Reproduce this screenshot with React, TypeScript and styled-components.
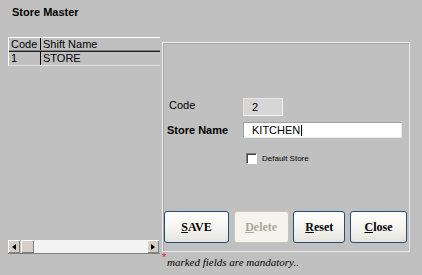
import styled, { createGlobalStyle } from "styled-components";

const GlobalStyle = createGlobalStyle`
  html, body {
    margin: 0;
    padding: 0;
  }
  body {
    background: #c0c0c0;
    font-family: "Liberation Sans", Arial, sans-serif;
    font-size: 11px;
    color: #000;
  }
`;

const rows = [{ code: "1", name: "STORE" }];

const buttons = [
  { label: "SAVE", width: 65, disabled: false },
  { label: "Delete", width: 55, disabled: true },
  { label: "Reset", width: 52, disabled: false },
  { label: "Close", width: 57, disabled: false },
];

const ActionButton = ({
  label,
  width,
  disabled,
}: {
  label: string;
  width: number;
  disabled: boolean;
}) => (
  <Button $width={width} disabled={disabled}>
    <u>{label[0]}</u>
    {label.slice(1)}
  </Button>
);

const App = () => {
  return (
    <Page>
      <GlobalStyle />
      <Title>Store Master</Title>
      <Main>
        <LeftColumn>
          <Table>
            <HeaderRow>
              <Cell>Code</Cell>
              <Cell $divider>Shift Name</Cell>
            </HeaderRow>
            {rows.map((row) => (
              <DataRow key={row.code}>
                <Cell>{row.code}</Cell>
                <Cell $divider>{row.name}</Cell>
              </DataRow>
            ))}
          </Table>
          <ScrollBar>
            <ScrollButton>
              <Arrow $dir="left" />
            </ScrollButton>
            <ScrollButton $thumb />
            <Track />
            <ScrollButton>
              <Arrow $dir="right" />
            </ScrollButton>
          </ScrollBar>
        </LeftColumn>
        <RightColumn>
          <Panel>
            <Form>
              <Label $top>Code</Label>
              <CodeBox>2</CodeBox>
              <Label $bold>Store Name</Label>
              <TextBox>
                KITCHEN
                <Caret />
              </TextBox>
              <CheckRow>
                <CheckBox />
                <CheckLabel>Default Store</CheckLabel>
              </CheckRow>
            </Form>
            <ButtonRow>
              {buttons.map((b) => (
                <ActionButton key={b.label} {...b} />
              ))}
            </ButtonRow>
          </Panel>
          <Footnote>
            <Star>*</Star>
            <Note>marked fields are mandatory..</Note>
          </Footnote>
        </RightColumn>
      </Main>
    </Page>
  );
};

export default App;

const Page = styled.div`
  width: 422px;
  height: 275px;
  overflow: hidden;
  display: flex;
  flex-direction: column;
`;

const Title = styled.div`
  height: 13px;
  padding: 6px 0 0 12px;
  font-weight: bold;
  font-size: 11px;
  line-height: 13px;
`;

const Main = styled.div`
  display: grid;
  grid-template-columns: 152px 248px;
  column-gap: 2px;
  margin: 18px 0 0 8px;
`;

const LeftColumn = styled.div`
  display: flex;
  flex-direction: column;
  height: 216px;
`;

const Table = styled.div`
  border-left: 1px solid #ffffff;
`;

const HeaderRow = styled.div`
  display: grid;
  grid-template-columns: 31px 1fr;
  height: 12px;
  border-top: 1px solid #ffffff;
  border-bottom: 1px solid #808080;
  box-shadow: 0 1px 0 #202020;
  margin-bottom: 1px;
`;

const DataRow = styled.div`
  display: grid;
  grid-template-columns: 31px 1fr;
  height: 13px;
  border-bottom: 1px solid #e4e4e4;
`;

const Cell = styled.div<{ $divider?: boolean }>`
  padding-left: ${(p) => (p.$divider ? 2 : 2)}px;
  border-left: ${(p) => (p.$divider ? "1px solid #000" : "none")};
  font-size: 11px;
  line-height: 13px;
  white-space: nowrap;
  overflow: hidden;
`;

const ScrollBar = styled.div`
  margin-top: auto;
  display: flex;
  height: 13px;
  box-shadow: 0 1px 0 #808080;
`;

const ScrollButton = styled.div<{ $thumb?: boolean }>`
  width: ${(p) => (p.$thumb ? 13 : 12)}px;
  height: 13px;
  margin-right: ${(p) => (p.$thumb ? 0 : 1)}px;
  box-sizing: border-box;
  background: #d4d0c8;
  box-shadow: inset 1px 1px 0 #ffffff, inset -1px -1px 0 #808080;
  display: flex;
  align-items: center;
  justify-content: center;
`;

const Arrow = styled.div<{ $dir: "left" | "right" }>`
  width: 0;
  height: 0;
  border-top: 3px solid transparent;
  border-bottom: 3px solid transparent;
  border-left: ${(p) => (p.$dir === "right" ? "4px solid #000" : "none")};
  border-right: ${(p) => (p.$dir === "left" ? "4px solid #000" : "none")};
`;

const Track = styled.div`
  flex: 1;
  background: #f4f4f4;
`;

const RightColumn = styled.div`
  display: flex;
  flex-direction: column;
  padding-top: 5px;
`;

const Panel = styled.div`
  box-sizing: border-box;
  height: 210px;
  border: 1px solid #ececec;
  box-shadow: inset 1px 1px 0 #a8a8a8;
  display: flex;
  flex-direction: column;
`;

const Form = styled.div`
  display: grid;
  grid-template-columns: 76px auto;
  align-items: center;
  row-gap: 6px;
  padding: 55px 0 0 4px;
`;

const Label = styled.div<{ $bold?: boolean; $top?: boolean }>`
  font-size: 11px;
  line-height: 13px;
  font-weight: ${(p) => (p.$bold ? "bold" : "normal")};
  padding-left: ${(p) => (p.$top ? 2 : 0)}px;
  align-self: ${(p) => (p.$top ? "start" : "center")};
  padding-top: ${(p) => (p.$top ? 1 : 0)}px;
`;

const CodeBox = styled.div`
  box-sizing: border-box;
  width: 40px;
  height: 18px;
  padding-left: 8px;
  background: #d6d6d6;
  border: 1px solid #e6e6e6;
  border-right-color: #f4f4f4;
  border-bottom-color: #f4f4f4;
  line-height: 16px;
  font-size: 11px;
`;

const TextBox = styled.div`
  box-sizing: border-box;
  width: 159px;
  height: 16px;
  padding-left: 8px;
  background: #ffffff;
  border: 1px solid #a0a0a0;
  border-right-color: #e8e8e8;
  border-bottom-color: #e8e8e8;
  line-height: 14px;
  font-size: 11px;
  display: flex;
  align-items: center;
`;

const Caret = styled.span`
  display: inline-block;
  width: 1px;
  height: 11px;
  background: #000;
  margin-left: 1px;
`;

const CheckRow = styled.div`
  grid-column: 2;
  display: flex;
  align-items: center;
  gap: 5px;
  padding-left: 3px;
  margin-top: 9px;
`;

const CheckBox = styled.div`
  box-sizing: border-box;
  width: 11px;
  height: 11px;
  background: #ffffff;
  border: 1px solid #808080;
  border-right-color: #ffffff;
  border-bottom-color: #ffffff;
  box-shadow: inset 1px 1px 0 #404040;
`;

const CheckLabel = styled.span`
  font-size: 8px;
  line-height: 11px;
`;

const ButtonRow = styled.div`
  margin-top: auto;
  margin-bottom: 8px;
  width: 243px;
  padding-left: 1px;
  display: flex;
  justify-content: space-between;
`;

const Button = styled.button<{ $width: number }>`
  box-sizing: border-box;
  width: ${(p) => p.$width}px;
  height: 32px;
  padding: 0;
  border: 1px solid #1f4f7c;
  border-radius: 3px;
  background: linear-gradient(#ffffff, #f3f2ee 60%, #e3e2da);
  font-family: "Liberation Serif", "Times New Roman", serif;
  font-weight: bold;
  font-size: 12px;
  color: #000;
  &:disabled {
    border-color: #c9c7ba;
    background: #f4f3ee;
    color: #aca899;
  }
`;

const Footnote = styled.div`
  display: flex;
  align-items: flex-start;
  padding-top: 1px;
`;

const Star = styled.span`
  color: #e02020;
  font-size: 11px;
  line-height: 9px;
  width: 5px;
`;

const Note = styled.span`
  font-family: "Liberation Serif", "Times New Roman", serif;
  font-style: italic;
  font-size: 11px;
  line-height: 12px;
  margin-top: 3px;
`;
